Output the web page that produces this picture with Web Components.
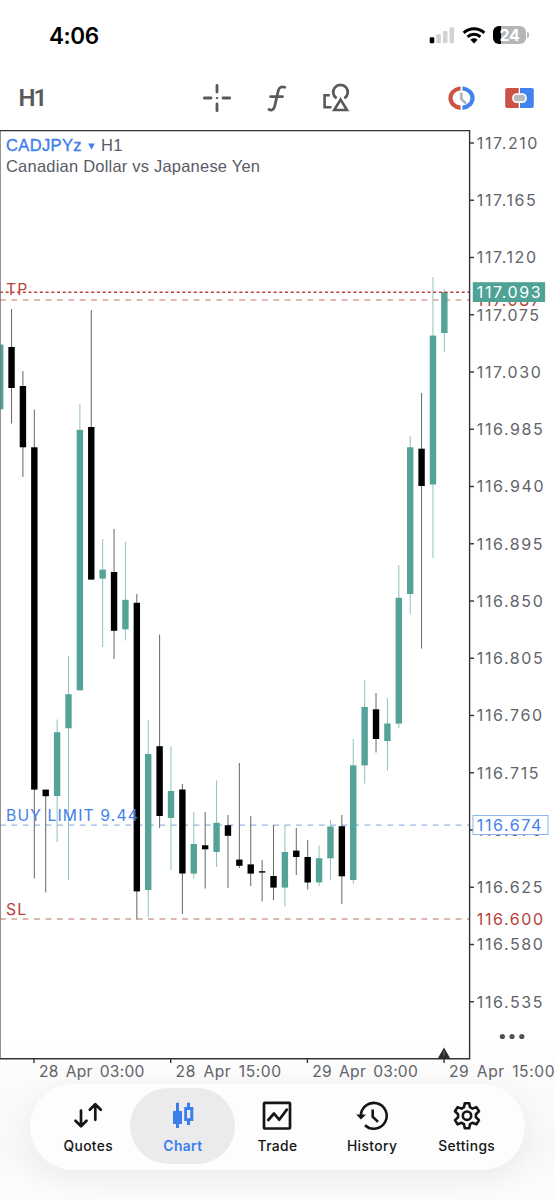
<!DOCTYPE html>
<html lang="en">
<head>
<meta charset="utf-8">
<meta name="viewport" content="width=device-width, initial-scale=1">
<title>CADJPYz H1</title>
<style>
  body {
    margin: 0;
    background: #fff;
    font-family: "Inter", "Liberation Sans", sans-serif;
    overflow: hidden;
  }
</style>
</head>
<body>
<trading-app>
  <status-bar time="4:06" battery="24"></status-bar>
  <chart-toolbar timeframe="H1"></chart-toolbar>
  <price-chart></price-chart>
  <tab-bar>
    <tab-item icon="quotes">Quotes</tab-item>
    <tab-item icon="chart" active>Chart</tab-item>
    <tab-item icon="trade">Trade</tab-item>
    <tab-item icon="history">History</tab-item>
    <tab-item icon="settings">Settings</tab-item>
  </tab-bar>
</trading-app>

<script>
  class TradingApp extends HTMLElement {
    constructor() {
      super();
      this.attachShadow({ mode: "open" });
      this.shadowRoot.innerHTML = `
        <style>
          :host {
            display: flex;
            flex-direction: column;
            width: 555px;
            height: 1200px;
            overflow: hidden;
            background: linear-gradient(#fff 1040px, #fbfbfb 1090px, #f9f9f9 1150px, #fdfdfd 1200px);
          }
        </style>
        <slot></slot>
      `;
    }
  }

  class StatusBar extends HTMLElement {
    constructor() {
      super();
      this.attachShadow({ mode: "open" });
    }

    connectedCallback() {
      this.shadowRoot.innerHTML = `
        <style>
          :host {
            display: flex;
            align-items: center;
            justify-content: space-between;
            height: 70px;
            padding: 0 26px 0 49px;
            box-sizing: border-box;
            flex: none;
          }
          .time {
            font-size: 22.5px;
            font-weight: 600;
            letter-spacing: -0.45px;
            color: #000;
          }
          .icons {
            display: flex;
            align-items: center;
            gap: 7px;
          }
          .battery {
            display: flex;
            align-items: center;
            gap: 1px;
          }
          .cell {
            width: 33px;
            height: 18px;
            line-height: 18px;
            border-radius: 6px;
            background: linear-gradient(90deg, #000 8px, #b6b6b6 8px);
            color: #fff;
            font-size: 16px;
            font-weight: 700;
            letter-spacing: -0.3px;
            text-align: center;
          }
          .tip {
            width: 2px;
            height: 6px;
            border-radius: 0 2px 2px 0;
            background: #b6b6b6;
          }
        </style>
        <span class="time">${this.getAttribute("time")}</span>
        <div class="icons">
          <svg width="26" height="18" viewBox="0 0 26 18">
            <rect x="0.7" y="11.3" width="4.6" height="6" rx="1.3" fill="#000"/>
            <rect x="7.3" y="8.3" width="4.6" height="9" rx="1.3" fill="#d2d2d2"/>
            <rect x="13.9" y="5" width="4.6" height="12.3" rx="1.3" fill="#d2d2d2"/>
            <rect x="20.5" y="1.2" width="4.6" height="16.1" rx="1.3" fill="#d2d2d2"/>
          </svg>
          <svg width="24" height="18" viewBox="0 0 24 18">
            <g fill="none" stroke="#000" stroke-width="3">
              <path d="M1.7 6.8 A15 15 0 0 1 22.3 6.8"/>
              <path d="M5.6 10.9 A9.2 9.2 0 0 1 18.4 10.9"/>
            </g>
            <path d="M12 17.4 L8.4 13.8 A5.2 5.2 0 0 1 15.6 13.8 Z" fill="#000"/>
          </svg>
          <div class="battery">
            <div class="cell">${this.getAttribute("battery")}</div>
            <div class="tip"></div>
          </div>
        </div>
      `;
    }
  }

  class ChartToolbar extends HTMLElement {
    constructor() {
      super();
      this.attachShadow({ mode: "open" });
    }

    connectedCallback() {
      this.shadowRoot.innerHTML = `
        <style>
          :host {
            display: grid;
            grid-template-columns: 1fr auto 1fr;
            align-items: center;
            height: 60px;
            padding: 0 21.5px 4px 18.5px;
            box-sizing: border-box;
            flex: none;
          }
          .timeframe {
            font-family: Roboto, "Liberation Sans", sans-serif;
            font-size: 24px;
            font-weight: 600;
            color: #58595b;
            letter-spacing: -2px;
          }
          .tools {
            display: flex;
            gap: 29.5px;
            margin-left: 1px;
          }
          .trade {
            display: flex;
            gap: 29px;
            justify-content: flex-end;
          }
          svg {
            display: block;
          }
        </style>
        <div class="timeframe">${this.getAttribute("timeframe")}</div>
        <div class="tools">
          <svg width="30" height="30" viewBox="0 0 30 30" stroke="#58595b" stroke-width="2.8" stroke-linecap="round">
            <path d="M15 2.3V9M15 21V27.7M2.3 15H9M21 15H27.7"/>
            <path d="M14.8 15H15.2" stroke-width="2.2"/>
          </svg>
          <svg width="30" height="30" viewBox="0 0 30 30" fill="none" stroke="#58595b" stroke-width="2.8" stroke-linecap="round">
            <path d="M22.8 4.3C19.4 3 17 4.4 16.1 8.2L12.9 22.5C12 26.6 9.8 28 7 26.5"/>
            <path d="M8.6 13.6H20.6"/>
          </svg>
          <svg width="30" height="30" viewBox="0 0 30 30" fill="none" stroke="#58595b" stroke-width="2.6">
            <path d="M8.8 12.3H3.6V24.2H10.5"/>
            <path d="M15.6 15.4A7.3 7.3 0 1 1 23.4 15.4" stroke-width="2.7"/>
            <path d="M19.6 16.6L26 27H13.2Z"/>
          </svg>
        </div>
        <div class="trade">
          <svg width="29" height="26" viewBox="0 0 29 26">
            <g fill="none" stroke-width="4.2">
              <path d="M13.6 3.5H13A10.6 9.6 0 0 0 13 22.6H13.6" stroke="#cb5245"/>
              <path d="M15.4 3.5H16A10.6 9.6 0 0 1 16 22.6H15.4" stroke="#4282ed"/>
            </g>
            <path d="M14.3 9V14L18.2 17.7" fill="none" stroke="#b4b6bb" stroke-width="2.9" stroke-linecap="round"/>
          </svg>
          <svg width="29" height="22" viewBox="0 0 29 22" style="margin-top:2px">
            <path d="M13.7 1H2.2A2 2 0 0 0 .2 3V19A2 2 0 0 0 2.2 21H13.7Z" fill="#cb5245"/>
            <path d="M15 1H26.8A2 2 0 0 1 28.8 3V19A2 2 0 0 1 26.8 21H15Z" fill="#4282ed"/>
            <rect x="8.1" y="7" width="12.8" height="8.2" rx="3.4" fill="#b8babe" stroke="#fff" stroke-width="1.7"/>
          </svg>
        </div>
      `;
    }
  }

  // [high, body top, body bottom, low, direction]
  const CANDLES = [
    [344.5, 344.5, 409.3, 409.3, "up"],
    [309, 347, 388, 423.5, "down"],
    [371, 386, 447.3, 477, "down"],
    [409.5, 447.3, 789.6, 878.5, "down"],
    [789.6, 789.6, 796.2, 892.3, "down"],
    [719.5, 732.2, 796, 842, "up"],
    [656, 694.2, 728.3, 880, "up"],
    [404, 429.8, 690.3, 690.3, "up"],
    [310, 427, 579.6, 579.6, "down"],
    [539, 569.6, 578.6, 647, "up"],
    [529, 572, 630.8, 659, "down"],
    [542, 599.8, 629.3, 640.5, "up"],
    [594, 602.8, 891.4, 919.5, "down"],
    [720, 754, 890, 917, "up"],
    [634.5, 746.2, 816, 828, "down"],
    [746.5, 791, 818, 870, "up"],
    [784, 789.5, 873.5, 914, "down"],
    [812, 844, 873.6, 878.5, "up"],
    [812, 845.3, 849.3, 888.5, "down"],
    [780.5, 822.8, 852, 867, "up"],
    [815, 825.2, 835.8, 888, "down"],
    [763, 859.6, 865.8, 868, "down"],
    [816, 864.4, 873.6, 886, "down"],
    [860, 871.2, 872.6, 901.5, "down"],
    [825, 876, 887.6, 900, "down"],
    [825, 852, 887.6, 906.5, "up"],
    [828, 850.6, 857, 875, "down"],
    [840, 857, 882.5, 889.5, "down"],
    [845.5, 858.2, 882.4, 886, "up"],
    [820, 826.5, 858.3, 880, "up"],
    [815, 826.2, 876.3, 904, "down"],
    [739, 765.3, 880, 883.5, "up"],
    [680, 707, 765.4, 783.5, "up"],
    [693, 709.3, 739, 752.5, "down"],
    [698, 723.5, 741, 770.5, "up"],
    [565, 597.8, 723.6, 728, "up"],
    [436, 447.3, 594, 614, "up"],
    [393, 448.7, 486, 648.5, "down"],
    [277, 335.6, 484.5, 558, "up"],
    [289, 292, 333, 352, "up"]
  ];

  const STEP = 11.39;
  const PRICE_TOP = 143;
  const PRICE_GAP = 57.25;

  class PriceChart extends HTMLElement {
    constructor() {
      super();
      this.attachShadow({ mode: "open" });
    }

    connectedCallback() {
      this.render();
    }

    drawCandles() {
      return CANDLES.map(([high, top, bottom, low, dir], i) => {
        const x = 0.15 + i * STEP;
        return `<g class="${dir}">
          <rect class="wick" x="${x - 0.5}" y="${high}" width="1" height="${low - high}"/>
          <rect x="${x - 3.2}" y="${top}" width="6.4" height="${bottom - top}"/>
        </g>`;
      }).join("");
    }

    drawPrices() {
      let out = "";
      for (let i = 0; i < 16; i++) {
        const y = PRICE_TOP + i * PRICE_GAP;
        const price = (117.21 - i * 0.045).toFixed(3);
        out += `<path class="axis" d="M469.6 ${y}H474"/>
          <text class="num" x="476.8" y="${y + 5.8}">${price}</text>`;
      }
      return out;
    }

    drawTimes() {
      const times = ["28 Apr 03:00", "28 Apr 15:00", "29 Apr 03:00", "29 Apr 15:00"];
      return times.map((t, i) => {
        const x = 34 + i * 136.7;
        return `<path class="axis" d="M${x} 1059V1063"/>
          <text class="num time" x="${x + 4.9}" y="1076.8" textLength="106.5">${t}</text>`;
      }).join("");
    }

    render() {
      this.shadowRoot.innerHTML = `
        <style>
          :host {
            display: block;
            height: 954px;
            flex: none;
          }
          svg {
            display: block;
          }
          text {
            font-family: "Inter", "Liberation Sans", sans-serif;
            font-size: 16px;
          }
          .title {
            font-family: "Liberation Sans", sans-serif;
            font-size: 16.5px;
            fill: #595b66;
          }
          .symbol {
            fill: #3d7de8;
            stroke: #3d7de8;
            stroke-width: 0.35px;
          }
          .num {
            fill: #62646a;
            letter-spacing: 1.6px;
          }
          .time {
            font-size: 15.6px;
            letter-spacing: 1px;
            word-spacing: 2.5px;
          }
          .order {
            font-size: 15.7px;
            letter-spacing: 1.2px;
          }
          .axis {
            stroke: #333;
            stroke-width: 1.4;
            fill: none;
          }
          .up { fill: #54a398; }
          .down { fill: #000; }
          .up .wick { fill: #8fc4bc; }
          .down .wick { fill: #666; }
          .red { fill: #b94039; }
          .blue { fill: #4280ee; }
          .white { fill: #fff; }
          .level {
            fill: none;
            stroke-width: 1.3;
            stroke-dasharray: 5.8 5.59;
          }
        </style>
        <svg width="555" height="954" viewBox="0 130 555 954">
          <path class="level" d="M0 300H469" stroke="#d9a197"/>
          <path class="level" d="M0 825.1H469" stroke="#9ab6e4"/>
          <path class="level" d="M0 919H469" stroke="#d0a098"/>
          ${this.drawCandles()}
          <text class="order red" x="6" y="295">TP</text>
          <path d="M0 292.3H469" stroke="#b94039" stroke-width="1.4" stroke-dasharray="3 2.7"/>
          <text class="order blue" x="6" y="820.8" textLength="133">BUY LIMIT 9.44</text>
          <text class="order red" x="6" y="914.6">SL</text>

          <path d="M0.4 130V1059" stroke="#777" stroke-width="0.9"/>
          <path class="axis" d="M0 130.6H469.6V1058.8H0"/>
          ${this.drawPrices()}
          ${this.drawTimes()}
          <path d="M444 1047.5L450.6 1059H437.4Z" fill="#2c2c2c"/>
          <path d="M444 1051V1055.5" stroke="#888" stroke-width="0.8"/>

          <text class="num red" x="476.8" y="305.5">117.087</text>
          <rect x="472.8" y="282.2" width="72.3" height="19.8" fill="#4ea296"/>
          <text class="num white" x="476.8" y="298">117.093</text>
          <rect x="473" y="815.5" width="75" height="19" fill="#fff" stroke="#8eb2f3" stroke-width="1"/>
          <text class="num blue" x="476.8" y="830.8">116.674</text>
          <text class="num red" x="476.8" y="925">116.600</text>

          <text class="title symbol" x="6" y="150.8" textLength="75.5">CADJPYz</text>
          <path d="M88.2 143.5H94.8L91.5 149.8Z" fill="#4280ee"/>
          <text class="title" x="101" y="150.8" textLength="21.5">H1</text>
          <text class="title" x="6" y="172" textLength="254">Canadian Dollar vs Japanese Yen</text>

          <g fill="#505154">
            <circle cx="502.4" cy="1036.5" r="2.6"/>
            <circle cx="512" cy="1036.5" r="2.6"/>
            <circle cx="521.8" cy="1036.5" r="2.6"/>
          </g>
        </svg>
      `;
    }
  }

  class TabBar extends HTMLElement {
    constructor() {
      super();
      this.attachShadow({ mode: "open" });
      this.shadowRoot.innerHTML = `
        <style>
          :host {
            display: grid;
            grid-template-columns: repeat(5, 1fr);
            height: 86px;
            margin: 0 30px;
            padding: 4px 11px 6px;
            box-sizing: border-box;
            border-radius: 43px;
            background: #fdfdfd;
            box-shadow: 0 8px 36px rgba(0, 0, 0, 0.075);
            flex: none;
          }
        </style>
        <slot></slot>
      `;
    }
  }

  const TAB_ICONS = {
    quotes: `<g fill="none" stroke="currentColor" stroke-width="2.7" stroke-linecap="round" stroke-linejoin="round">
        <path d="M9 8.5V24M3.5 18.7L9 24.3L14.5 18.7"/>
        <path d="M23.3 17.8V2.5M17.8 7.8L23.3 2.2L28.8 7.8"/>
      </g>`,
    chart: `<path d="M9 0.7H12V9H15V22H12V26H9V22H6V9H9Z" fill="currentColor"/>
      <path d="M20 0.7H23V5H26.3V19H23V23H20V19H17.2V5H20ZM20 8V16.2H23.3V8Z" fill="currentColor" fill-rule="evenodd"/>`,
    trade: `<g fill="none" stroke="currentColor" stroke-width="2.7" stroke-linejoin="round">
        <rect x="3" y="0.9" width="26" height="25.6" rx="0.8"/>
        <path d="M7.3 18L13 11.5L18.2 17.7L25.8 7.6" stroke-linecap="round"/>
      </g>`,
    history: `<g fill="none" stroke="currentColor" stroke-width="2.6">
        <path d="M4.9 14.2A12.9 12.9 0 1 1 9 23.3"/>
        <path d="M16.7 7.5V14.6L22 19.9"/>
        <path d="M2 13.2L5 16.5L8.2 13.2Z" fill="currentColor" stroke-width="1.5"/>
      </g>`,
    settings: `<g fill="none" stroke="currentColor" stroke-width="2.6" stroke-linejoin="round">
        <path d="M13.8 1.2H18.2L19 5.2L21.4 6.6L25.4 5.1L28 9.3L24.9 12.2V15.2L28 18.1L25.4 22.3L21.4 20.8L19 22.2L18.2 26.2H13.8L13 22.2L10.6 20.8L6.6 22.3L4 18.1L7.1 15.2V12.2L4 9.3L6.6 5.1L10.6 6.6L13 5.2Z"/>
        <circle cx="16" cy="13.7" r="4.2"/>
      </g>`
  };

  class TabItem extends HTMLElement {
    constructor() {
      super();
      this.attachShadow({ mode: "open" });
    }

    connectedCallback() {
      this.shadowRoot.innerHTML = `
        <style>
          :host {
            display: flex;
            flex-direction: column;
            align-items: center;
            gap: 9px;
            margin: 0 -5.3px;
            padding-top: 14px;
            border-radius: 38px;
            box-sizing: border-box;
            color: #151515;
            font-size: 13.8px;
            font-weight: 500;
            line-height: 17px;
            letter-spacing: 0.4px;
          }
          :host([active]) {
            background: #ebebeb;
            color: #3a7eec;
            font-weight: 600;
          }
          svg {
            display: block;
            overflow: visible;
          }
        </style>
        <svg width="32" height="27" viewBox="0 0 32 27">${TAB_ICONS[this.getAttribute("icon")]}</svg>
        <span><slot></slot></span>
      `;
    }
  }

  customElements.define("trading-app", TradingApp);
  customElements.define("status-bar", StatusBar);
  customElements.define("chart-toolbar", ChartToolbar);
  customElements.define("price-chart", PriceChart);
  customElements.define("tab-bar", TabBar);
  customElements.define("tab-item", TabItem);
</script>
</body>
</html>
